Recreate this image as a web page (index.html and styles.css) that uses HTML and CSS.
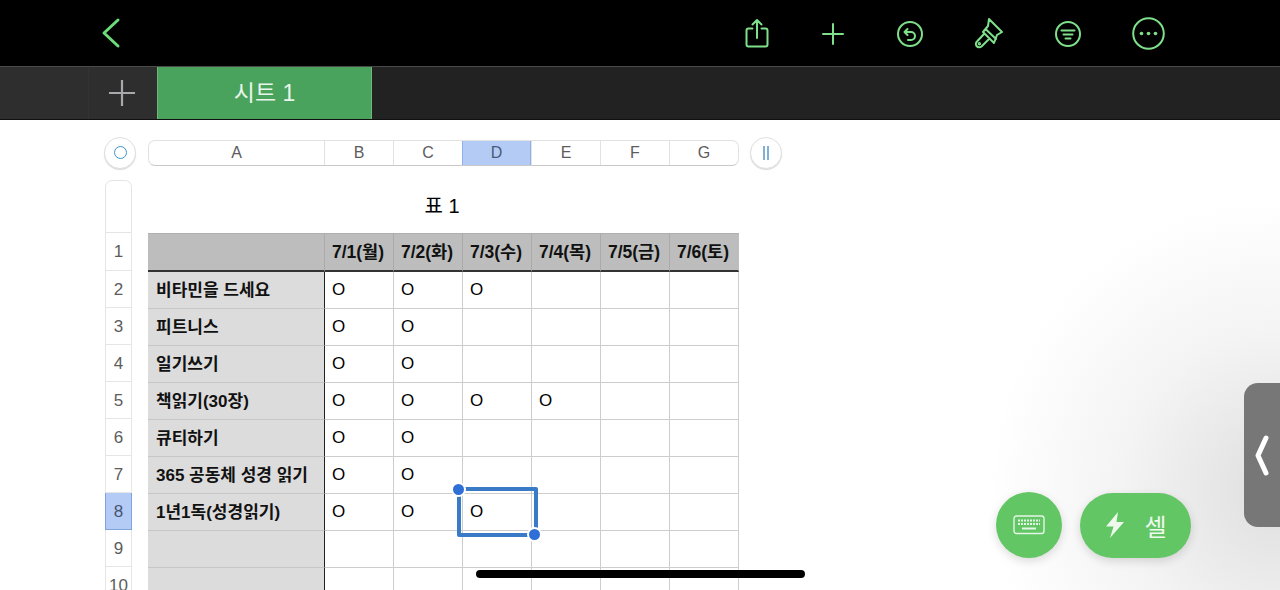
FILE: index.html
```html
<!DOCTYPE html>
<html lang="ko">
<head>
<meta charset="utf-8">
<title>시트 1</title>
<link rel="stylesheet" href="styles.css">
</head>
<body>
<header class="topbar">
  <button class="tool back" aria-label="뒤로">
    <svg width="20" height="32" viewBox="0 0 20 32"><path d="M17 3 L3 16 L17 29"/></svg>
  </button>
  <div class="tools">
    <svg class="ic sp" width="24" height="30" viewBox="0 0 24 30"><path d="M7.500 10.500 H3.500 a2 2 0 0 0 -2 2 V26.500 a2 2 0 0 0 2 2 H20.500 a2 2 0 0 0 2 -2 V12.500 a2 2 0 0 0 -2 -2 H16.500 M12 20 V2 M7.500 6.500 L12 2 L16.500 6.500"/></svg>
    <svg class="ic sp low" width="22" height="22" viewBox="0 0 22 22"><path d="M11 1 V21 M1 11 H21"/></svg>
    <svg class="ic low" width="26" height="26" viewBox="0 0 26 26"><circle cx="13" cy="13" r="12"/><path d="M10.500 8 L7.500 11 L10.500 14 M7.500 11 H14 a4 4 0 0 1 0 8 H11"/></svg>
    <svg class="ic brush" width="30" height="32" viewBox="0 0 30 32"><path d="M15 2 L28 15 L23 18 L20 26 L9 15 L14 9 Z M10 17 L3 24.500 a3 3 0 0 0 4.500 5 L15 22 M12 12.500 L22 22"/><circle cx="5.400" cy="26.800" r="0.700"/></svg>
    <svg class="ic low" width="26" height="26" viewBox="0 0 26 26"><circle cx="13" cy="13" r="12"/><path d="M6.500 9.500 H19.500 M8.500 13.500 H17.500 M10.500 17.500 H15.500"/></svg>
    <svg class="ic" width="33" height="33" viewBox="0 0 33 33"><circle cx="16.500" cy="16.500" r="15.300"/><circle class="dot" cx="9.500" cy="16.500" r="1.800"/><circle class="dot" cx="16.500" cy="16.500" r="1.800"/><circle class="dot" cx="23.500" cy="16.500" r="1.800"/></svg>
  </div>
</header>

<nav class="tabs">
  <div class="tab-blank"></div>
  <button class="tab-add" aria-label="추가">
    <svg width="28" height="28" viewBox="0 0 28 28"><path d="M14 1 V27 M1 14 H27"/></svg>
  </button>
  <div class="tab-active">시트 1</div>
</nav>

<main class="sheet">
  <div class="col-row">
    <div class="round-btn"><span class="ring"></span></div>
    <div class="col-heads">
      <span class="col-a">A</span><span>B</span><span>C</span><span class="on">D</span><span>E</span><span>F</span><span>G</span>
    </div>
    <div class="round-btn"><span class="bars"></span></div>
  </div>

  <div class="body-row">
    <div class="gutter">
      <div class="g-top"></div>
      <div class="g g1">1</div>
      <div class="g">2</div>
      <div class="g">3</div>
      <div class="g">4</div>
      <div class="g">5</div>
      <div class="g">6</div>
      <div class="g">7</div>
      <div class="g on">8</div>
      <div class="g">9</div>
      <div class="g">10</div>
    </div>
    <div class="table-wrap">
      <div class="title">표 1</div>
      <table class="grid">
        <colgroup><col class="w-a"><col class="w-d"><col class="w-d"><col class="w-d"><col class="w-d"><col class="w-d"><col class="w-d"></colgroup>
        <thead>
          <tr><th></th><th>7/1(월)</th><th>7/2(화)</th><th>7/3(수)</th><th>7/4(목)</th><th>7/5(금)</th><th>7/6(토)</th></tr>
        </thead>
        <tbody>
          <tr><th>비타민을 드세요</th><td>O</td><td>O</td><td>O</td><td></td><td></td><td></td></tr>
          <tr><th>피트니스</th><td>O</td><td>O</td><td></td><td></td><td></td><td></td></tr>
          <tr><th>일기쓰기</th><td>O</td><td>O</td><td></td><td></td><td></td><td></td></tr>
          <tr><th>책읽기(30장)</th><td>O</td><td>O</td><td>O</td><td>O</td><td></td><td></td></tr>
          <tr><th>큐티하기</th><td>O</td><td>O</td><td></td><td></td><td></td><td></td></tr>
          <tr><th>365 공동체 성경 읽기</th><td>O</td><td>O</td><td></td><td></td><td></td><td></td></tr>
          <tr><th>1년1독(성경읽기)</th><td>O</td><td>O</td><td>O</td><td></td><td></td><td></td></tr>
          <tr><th></th><td></td><td></td><td></td><td></td><td></td><td></td></tr>
          <tr><th></th><td></td><td></td><td></td><td></td><td></td><td></td></tr>
        </tbody>
      </table>
      <div class="selection"><i class="h h-a"></i><i class="h h-b"></i></div>
    </div>
  </div>

  <div class="fabs">
    <button class="fab kb" aria-label="키보드">
      <svg width="32" height="20" viewBox="0 0 32 20"><rect x="1" y="1" width="30" height="17.500" rx="2.500"/><path class="keys" d="M5 5.500 H27 M5 9 H27"/><path class="bar" d="M9 13.500 H23"/></svg>
    </button>
    <button class="fab cell">
      <svg width="20" height="28" viewBox="0 0 20 28"><path d="M13 1 L1 15.500 H8.500 L5 27 L19 11 H11.500 Z"/></svg>
      <span>셀</span>
    </button>
  </div>

  <div class="handle"><svg width="14" height="42" viewBox="0 0 14 42"><path d="M11 3 L3 20.500 L11 38"/></svg></div>
</main>
<div class="home"></div>
</body>
</html>
```

FILE: styles.css
```css
* { box-sizing: border-box; }
html, body { margin: 0; padding: 0; }
body {
  width: 1280px; height: 590px; overflow: hidden; position: relative;
  background: #fff; color: #000;
  font-family: "Liberation Sans", "Noto Sans CJK KR", sans-serif;
}
button { border: 0; padding: 0; background: none; font: inherit; color: inherit; }

.topbar {
  height: 66px; background: #000;
  display: flex; align-items: center; justify-content: space-between;
  padding: 0 115px 0 101px;
}
.back svg { display: block; fill: none; stroke: #6cdc78; stroke-width: 3; stroke-linecap: round; stroke-linejoin: round; }
.tools { display: flex; align-items: center; gap: 51px; }
.ic { display: block; fill: none; stroke: #7fe08b; stroke-width: 2; stroke-linecap: round; stroke-linejoin: round; }
.ic .dot { fill: #7fe08b; stroke: none; }
.sp { margin-right: 2px; }
.low { margin-top: 2px; }

.tabs {
  height: 54px; background: #222; display: flex;
  border-top: 1px solid #4a4a4a; border-bottom: 1px solid #111;
}
.tab-blank { width: 89px; background: #2e2e2e; border-right: 1px solid #333; }
.tab-add {
  width: 68px; background: #2e2e2e; padding-right: 2px;
  display: flex; align-items: center; justify-content: center;
}
.tab-add svg { fill: none; stroke: #a9a9ad; stroke-width: 2.200; }
.tab-active {
  width: 215px; background: #4aa35c;
  color: #e9f5eb; font-size: 23px; line-height: 53px; text-align: center;
  border-left: 1px solid #6fb57d; border-right: 1px solid #6fb57d;
}

.sheet {
  position: relative; height: 470px; overflow: hidden; padding-top: 20px;
  background: radial-gradient(circle 290px at 1280px 370px, #dedede 0%, #e8e8e8 25%, #f4f4f4 55%, #fff 100%);
}

.col-row { display: flex; align-items: center; padding-left: 104px; height: 26px; }
.round-btn {
  width: 32px; height: 32px; border-radius: 50%; background: #fff;
  border: 1px solid #e0e0e0; box-shadow: 0 1px 1px #dadada; margin-top: -1px;
  display: flex; align-items: center; justify-content: center; flex: none;
}
.ring { width: 13px; height: 13px; border-radius: 50%; border: 1.600px solid #3a93cf; }
.bars { width: 6px; height: 14px; border-left: 2px solid #7fb0d6; border-right: 2px solid #7fb0d6; }

.col-heads {
  width: 591px; height: 26px; margin: 0 11px 0 12px; display: grid;
  grid-template-columns: 175px 69px 69px 69px 69px 69px 69px;
  border: 1px solid #e2e2e2; border-bottom-color: #c9c9c9; border-radius: 7px;
  overflow: hidden; background: #fff;
  font-size: 16px; color: #5c5c5c; line-height: 24px; text-align: center;
}
.col-heads span { border-left: 1px solid #e2e2e2; }
.col-heads .col-a { border-left: 0; }
.col-heads .on { background: #b4cbf6; border: 1px solid #8fb0e8; border-top: 0; border-bottom: 0; color: #4a5b78; }

.body-row { display: flex; padding-left: 105px; margin-top: 14px; gap: 16px; }
.gutter { width: 27px; flex: none; }
.g-top { height: 53px; border: 1px solid #e4e4e4; border-radius: 7px 7px 0 0; }
.g {
  height: 37px; border: 1px solid #e6e6e6; border-top: 0;
  font-size: 17px; color: #5c5c5c; line-height: 38px; text-align: center;
}
.g1 { height: 38px; line-height: 37px; }
.g.on { background: #b4cbf6; border: 1px solid #7fa3de; border-top: 0; color: #44546e; }

.table-wrap { position: relative; width: 591px; }
.title { height: 53px; font-size: 20px; line-height: 52px; text-align: center; padding-right: 3px; }

.grid { border-collapse: separate; border-spacing: 0; table-layout: fixed; width: 591px; font-size: 17px; }
.w-a { width: 177px; } .w-d { width: 69px; }
.grid th, .grid td {
  padding: 0 0 0 7px; height: 37px; font-weight: 400; text-align: left; white-space: nowrap; overflow: visible;
  border-right: 1px solid #cdcdcd; border-bottom: 1px solid #cdcdcd;
}
.grid thead th {
  height: 39px; background: #bcbdbc; font-weight: 700; padding: 0 2px 4px 0; text-align: center; font-size: 17.500px;
  color: #111; border-right: 1px solid #a9aaa9; border-bottom: 2px solid #333; border-top: 1px solid #b0b0b0;
}
.grid thead th:last-child { border-right: 1px solid #bcbdbc; }
.grid tbody th {
  background: #dcdcdc; font-weight: 700; color: #111; padding: 0 0 3px 8px;
  border-right: 1px solid #222; border-bottom-color: #c6c6c6;
}

.selection {
  position: absolute; left: 309px; top: 307px; width: 81px; height: 50px;
  border: 4px solid #3a7bc8; border-radius: 2px;
}
.h { position: absolute; width: 15px; height: 15px; border-radius: 50%; background: #2d6fd6; border: 2px solid #fff; }
.h-a { left: -10px; top: -9px; }
.h-b { right: -8px; bottom: -9px; }

.fabs { position: absolute; left: 996px; top: 372px; display: flex; gap: 18px; align-items: center; }
.fab {
  height: 66px; background: #62c665; color: #eef9ee;
  box-shadow: 0 3px 10px rgba(0,0,0,.14);
  display: flex; align-items: center; justify-content: center;
}
.kb { width: 66px; border-radius: 50%; }
.kb svg { fill: none; stroke: #e4f6e5; stroke-width: 1.400; }
.kb .keys { stroke-width: 2; stroke-dasharray: 2 1; }
.kb .bar { stroke-width: 2; }
.cell { width: 111px; height: 65px; border-radius: 33px; gap: 19px; font-size: 24px; padding-left: 1px; }
.cell svg { fill: #eef9ee; }

.handle {
  position: absolute; left: 1244px; top: 263px; width: 36px; height: 144px;
  background: #777; border-radius: 14px 0 0 14px;
  padding: 52px 0 0 11px;
}
.handle svg { display: block; fill: none; stroke: #fff; stroke-width: 5; stroke-linecap: round; stroke-linejoin: round; }

.home { position: absolute; left: 476px; top: 570px; width: 329px; height: 8px; background: #000; border-radius: 4px; }
```
